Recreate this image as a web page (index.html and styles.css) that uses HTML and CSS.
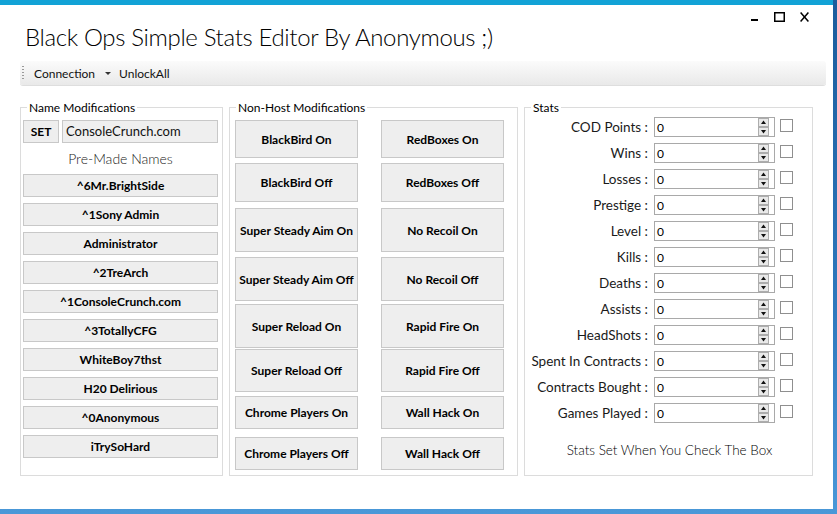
FILE: index.html
```html
<!DOCTYPE html>
<html>
<head>
<meta charset="utf-8">
<title>Black Ops Simple Stats Editor</title>
<link rel="stylesheet" href="styles.css">
</head>
<body>
<div class="window">
  <header class="header">
    <h1 class="title">Black Ops Simple Stats Editor By Anonymous ;)</h1>
    <div class="controls">
      <svg class="ctl-min" width="7" height="10" viewBox="0 0 7 10"><rect x="0" y="7" width="7" height="2" fill="#000"/></svg>
      <svg class="ctl-max" width="11" height="10" viewBox="0 0 11 10"><rect x="0.75" y="0.75" width="9.5" height="8.5" fill="none" stroke="#000" stroke-width="1.5"/></svg>
      <svg class="ctl-close" width="9" height="10" viewBox="0 0 9 10"><path d="M0.6 0.6 L8.4 9.4 M8.4 0.6 L0.6 9.4" stroke="#000" stroke-width="1.5" fill="none"/></svg>
    </div>
  </header>

  <div class="toolbar">
    <span class="grip"></span>
    <span class="menu-item menu-conn">Connection</span>
    <span class="caret"></span>
    <span class="menu-item menu-unlock">UnlockAll</span>
  </div>

  <div class="panels">
    <fieldset class="group group-name">
      <legend>Name Modifications</legend>
      <div class="name-body">
        <div class="set-row">
          <button class="btn btn-set">SET</button>
          <div class="textbox">ConsoleCrunch.com</div>
        </div>
        <div class="premade">Pre-Made Names</div>
        <div class="name-list">
          <button class="btn">^6Mr.BrightSide</button>
          <button class="btn">^1Sony Admin</button>
          <button class="btn">Administrator</button>
          <button class="btn">^2TreArch</button>
          <button class="btn">^1ConsoleCrunch.com</button>
          <button class="btn">^3TotallyCFG</button>
          <button class="btn">WhiteBoy7thst</button>
          <button class="btn">H20 Delirious</button>
          <button class="btn">^0Anonymous</button>
          <button class="btn">iTrySoHard</button>
        </div>
      </div>
    </fieldset>

    <fieldset class="group group-host">
      <legend>Non-Host Modifications</legend>
      <div class="host-body">
        <button class="btn">BlackBird On</button>
        <button class="btn">RedBoxes On</button>
        <button class="btn">BlackBird Off</button>
        <button class="btn">RedBoxes Off</button>
        <button class="btn">Super Steady Aim On</button>
        <button class="btn">No Recoil On</button>
        <button class="btn">Super Steady Aim Off</button>
        <button class="btn">No Recoil Off</button>
        <button class="btn">Super Reload On</button>
        <button class="btn">Rapid Fire On</button>
        <button class="btn">Super Reload Off</button>
        <button class="btn">Rapid Fire Off</button>
        <button class="btn">Chrome Players On</button>
        <button class="btn">Wall Hack On</button>
        <button class="btn">Chrome Players Off</button>
        <button class="btn">Wall Hack Off</button>
      </div>
    </fieldset>

    <fieldset class="group group-stats">
      <legend>Stats</legend>
      <div class="stats-body">
        <div class="stat-row"><span class="stat-label">COD Points :</span><div class="num"><span class="num-val">0</span><svg class="spin" width="11" height="18" viewBox="0 0 11 18"><rect x="0.5" y="0.5" width="10" height="8" fill="#e9e9e9" stroke="#adadad"/><rect x="0.5" y="9.5" width="10" height="8" fill="#e9e9e9" stroke="#adadad"/><path d="M5.5 2.5 L8 6 L3 6 Z" fill="#111"/><path d="M3 12 L8 12 L5.5 15.5 Z" fill="#111"/></svg></div><span class="check"></span></div>
        <div class="stat-row"><span class="stat-label">Wins :</span><div class="num"><span class="num-val">0</span><svg class="spin" width="11" height="18" viewBox="0 0 11 18"><rect x="0.5" y="0.5" width="10" height="8" fill="#e9e9e9" stroke="#adadad"/><rect x="0.5" y="9.5" width="10" height="8" fill="#e9e9e9" stroke="#adadad"/><path d="M5.5 2.5 L8 6 L3 6 Z" fill="#111"/><path d="M3 12 L8 12 L5.5 15.5 Z" fill="#111"/></svg></div><span class="check"></span></div>
        <div class="stat-row"><span class="stat-label">Losses :</span><div class="num"><span class="num-val">0</span><svg class="spin" width="11" height="18" viewBox="0 0 11 18"><rect x="0.5" y="0.5" width="10" height="8" fill="#e9e9e9" stroke="#adadad"/><rect x="0.5" y="9.5" width="10" height="8" fill="#e9e9e9" stroke="#adadad"/><path d="M5.5 2.5 L8 6 L3 6 Z" fill="#111"/><path d="M3 12 L8 12 L5.5 15.5 Z" fill="#111"/></svg></div><span class="check"></span></div>
        <div class="stat-row"><span class="stat-label">Prestige :</span><div class="num"><span class="num-val">0</span><svg class="spin" width="11" height="18" viewBox="0 0 11 18"><rect x="0.5" y="0.5" width="10" height="8" fill="#e9e9e9" stroke="#adadad"/><rect x="0.5" y="9.5" width="10" height="8" fill="#e9e9e9" stroke="#adadad"/><path d="M5.5 2.5 L8 6 L3 6 Z" fill="#111"/><path d="M3 12 L8 12 L5.5 15.5 Z" fill="#111"/></svg></div><span class="check"></span></div>
        <div class="stat-row"><span class="stat-label">Level :</span><div class="num"><span class="num-val">0</span><svg class="spin" width="11" height="18" viewBox="0 0 11 18"><rect x="0.5" y="0.5" width="10" height="8" fill="#e9e9e9" stroke="#adadad"/><rect x="0.5" y="9.5" width="10" height="8" fill="#e9e9e9" stroke="#adadad"/><path d="M5.5 2.5 L8 6 L3 6 Z" fill="#111"/><path d="M3 12 L8 12 L5.5 15.5 Z" fill="#111"/></svg></div><span class="check"></span></div>
        <div class="stat-row"><span class="stat-label">Kills :</span><div class="num"><span class="num-val">0</span><svg class="spin" width="11" height="18" viewBox="0 0 11 18"><rect x="0.5" y="0.5" width="10" height="8" fill="#e9e9e9" stroke="#adadad"/><rect x="0.5" y="9.5" width="10" height="8" fill="#e9e9e9" stroke="#adadad"/><path d="M5.5 2.5 L8 6 L3 6 Z" fill="#111"/><path d="M3 12 L8 12 L5.5 15.5 Z" fill="#111"/></svg></div><span class="check"></span></div>
        <div class="stat-row"><span class="stat-label">Deaths :</span><div class="num"><span class="num-val">0</span><svg class="spin" width="11" height="18" viewBox="0 0 11 18"><rect x="0.5" y="0.5" width="10" height="8" fill="#e9e9e9" stroke="#adadad"/><rect x="0.5" y="9.5" width="10" height="8" fill="#e9e9e9" stroke="#adadad"/><path d="M5.5 2.5 L8 6 L3 6 Z" fill="#111"/><path d="M3 12 L8 12 L5.5 15.5 Z" fill="#111"/></svg></div><span class="check"></span></div>
        <div class="stat-row"><span class="stat-label">Assists :</span><div class="num"><span class="num-val">0</span><svg class="spin" width="11" height="18" viewBox="0 0 11 18"><rect x="0.5" y="0.5" width="10" height="8" fill="#e9e9e9" stroke="#adadad"/><rect x="0.5" y="9.5" width="10" height="8" fill="#e9e9e9" stroke="#adadad"/><path d="M5.5 2.5 L8 6 L3 6 Z" fill="#111"/><path d="M3 12 L8 12 L5.5 15.5 Z" fill="#111"/></svg></div><span class="check"></span></div>
        <div class="stat-row"><span class="stat-label">HeadShots :</span><div class="num"><span class="num-val">0</span><svg class="spin" width="11" height="18" viewBox="0 0 11 18"><rect x="0.5" y="0.5" width="10" height="8" fill="#e9e9e9" stroke="#adadad"/><rect x="0.5" y="9.5" width="10" height="8" fill="#e9e9e9" stroke="#adadad"/><path d="M5.5 2.5 L8 6 L3 6 Z" fill="#111"/><path d="M3 12 L8 12 L5.5 15.5 Z" fill="#111"/></svg></div><span class="check"></span></div>
        <div class="stat-row"><span class="stat-label">Spent In Contracts :</span><div class="num"><span class="num-val">0</span><svg class="spin" width="11" height="18" viewBox="0 0 11 18"><rect x="0.5" y="0.5" width="10" height="8" fill="#e9e9e9" stroke="#adadad"/><rect x="0.5" y="9.5" width="10" height="8" fill="#e9e9e9" stroke="#adadad"/><path d="M5.5 2.5 L8 6 L3 6 Z" fill="#111"/><path d="M3 12 L8 12 L5.5 15.5 Z" fill="#111"/></svg></div><span class="check"></span></div>
        <div class="stat-row"><span class="stat-label">Contracts Bought :</span><div class="num"><span class="num-val">0</span><svg class="spin" width="11" height="18" viewBox="0 0 11 18"><rect x="0.5" y="0.5" width="10" height="8" fill="#e9e9e9" stroke="#adadad"/><rect x="0.5" y="9.5" width="10" height="8" fill="#e9e9e9" stroke="#adadad"/><path d="M5.5 2.5 L8 6 L3 6 Z" fill="#111"/><path d="M3 12 L8 12 L5.5 15.5 Z" fill="#111"/></svg></div><span class="check"></span></div>
        <div class="stat-row"><span class="stat-label">Games Played :</span><div class="num"><span class="num-val">0</span><svg class="spin" width="11" height="18" viewBox="0 0 11 18"><rect x="0.5" y="0.5" width="10" height="8" fill="#e9e9e9" stroke="#adadad"/><rect x="0.5" y="9.5" width="10" height="8" fill="#e9e9e9" stroke="#adadad"/><path d="M5.5 2.5 L8 6 L3 6 Z" fill="#111"/><path d="M3 12 L8 12 L5.5 15.5 Z" fill="#111"/></svg></div><span class="check"></span></div>
        <div class="stats-note">Stats Set When You Check The Box</div>
      </div>
    </fieldset>
  </div>
</div>
</body>
</html>
```

FILE: styles.css
```css
* { box-sizing: border-box; }

html, body {
  margin: 0;
  padding: 0;
  width: 837px;
  height: 514px;
  overflow: hidden;
}

body {
  background: linear-gradient(180deg, #1b5c9c 0%, #2f79bd 60%, #4a98d8 100%);
  font-family: Lato, "Open Sans", sans-serif;
  color: #000;
}

.window {
  width: 833px;
  height: 509px;
  background: #fff;
  border-top: 5px solid #12a2d6;
  display: flex;
  flex-direction: column;
}

/* header */
.header {
  display: flex;
  justify-content: space-between;
  align-items: flex-start;
}

.title {
  margin: 0;
  padding: 16px 0 0 25px;
  font-weight: 300;
  font-size: 24px;
  letter-spacing: -0.35px;
  line-height: 32px;
  color: #000;
}

.controls {
  display: flex;
  align-items: flex-start;
  padding: 7px 24px 0 0;
}

.ctl-min { margin-right: 16px; }
.ctl-max { margin-right: 15px; }

/* toolbar */
.toolbar {
  margin: 8px 7px 0 20px;
  height: 24px;
  display: flex;
  align-items: center;
  padding-left: 2px;
  background: linear-gradient(#fbfbfb, #e9e9e9);
  border-radius: 3px;
  box-shadow: 0 1px 0 #dedede;
  font-size: 12px;
  color: #111;
}

.grip {
  width: 2px;
  height: 14px;
  background: repeating-linear-gradient(#9a9a9a 0 1px, transparent 1px 3px);
}

.menu-conn { margin-left: 10px; }

.caret {
  margin-left: 10px;
  width: 0;
  height: 0;
  border-left: 3px solid transparent;
  border-right: 3px solid transparent;
  border-top: 3px solid #333;
}

.menu-unlock { margin-left: 8px; }

/* panels */
.panels {
  margin-top: 15px;
  padding-left: 20px;
  display: flex;
  gap: 6px;
}

.group {
  margin: 0;
  padding: 0;
  border: 1px solid #dcdcdc;
  height: 376px;
  min-width: 0;
}

.group legend {
  margin-left: 6px;
  padding: 0 2px;
  font-size: 12px;
  line-height: 15px;
  color: #000;
}

.group-name { width: 203px; }
.group-host { width: 289px; }
.group-stats { width: 289px; }

/* buttons */
.btn {
  font-family: Lato, "Open Sans", sans-serif;
  font-weight: 700;
  font-size: 12px;
  background: #eeeeee;
  border: 1px solid #c8c8c8;
  color: #000;
  padding: 0;
  margin: 0;
  border-radius: 0;
}

/* name modifications */
.name-body {
  padding: 5px 4px 0 2px;
}

.set-row {
  display: flex;
  gap: 3px;
  height: 23px;
}

.btn-set { width: 36px; }

.textbox {
  flex: 1;
  border: 1px solid #c8c8c8;
  background: #efefef;
  font-size: 13px;
  line-height: 20px;
  padding-left: 3px;
  color: #111;
}

.premade {
  height: 31px;
  line-height: 31px;
  text-align: center;
  font-size: 14px;
  font-weight: 300;
  color: #222;
}

.name-list {
  display: flex;
  flex-direction: column;
  gap: 6px;
}

.name-list .btn { height: 23px; }

/* non-host */
.host-body {
  padding: 5px 13px 0 5px;
  display: grid;
  grid-template-columns: 123px 123px;
  column-gap: 23px;
  grid-template-rows: 43px 45px 49px 47px 45px 47px 41px 32px;
}

.host-body .btn { align-self: start; height: 44px; }
.host-body .btn:nth-child(-n+2) { height: 38px; }
.host-body .btn:nth-child(3), .host-body .btn:nth-child(4) { height: 39px; }
.host-body .btn:nth-child(11), .host-body .btn:nth-child(12) { height: 43px; }
.host-body .btn:nth-child(n+13) { height: 33px; }

/* stats */
.stats-body {
  padding: 2px 0 0 2px;
}

.stat-row {
  display: flex;
  align-items: flex-start;
  height: 26px;
}

.stat-label {
  width: 121px;
  text-align: right;
  font-size: 13.5px;
  line-height: 20px;
  color: #1a1a1a;
  white-space: nowrap;
}

.num {
  margin-left: 6px;
  width: 121px;
  height: 20px;
  border: 1px solid #a9a9a9;
  display: flex;
  align-items: center;
  background: #fff;
}

.num-val {
  flex: 1;
  padding-left: 2px;
  font-size: 12px;
  color: #000;
}

.spin {
  display: block;
  margin-right: 5px;
}

.check {
  margin: 2px 0 0 5px;
  width: 13px;
  height: 13px;
  border: 1px solid #8f8f8f;
  background: #fff;
}

.stats-note {
  margin-top: 11px;
  text-align: center;
  font-size: 13.5px;
  font-weight: 300;
  line-height: 20px;
  color: #000;
}
```
